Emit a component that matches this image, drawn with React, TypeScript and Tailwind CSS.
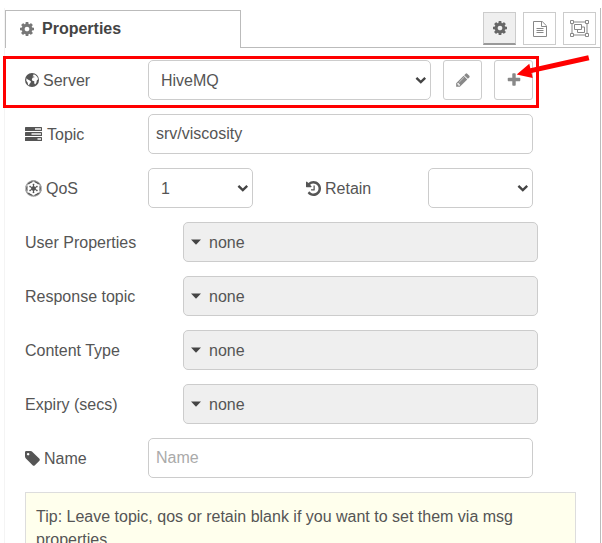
import { useState } from "react";
import type { ReactNode, SelectHTMLAttributes } from "react";
import { FaEmpire } from "react-icons/fa";

const ICONS = {
  cog: "M1152 896q0-106-75-181t-181-75-181 75-75 181 75 181 181 75 181-75 75-181zm512-109v222q0 12-8 23t-20 13l-185 28q-19 54-39 91 35 50 107 138 10 12 10 25t-9 23q-27 37-99 108t-94 71q-12 0-26-9l-138-108q-44 23-91 38-16 136-29 186-7 28-36 28h-222q-14 0-24.5-8.5t-11.5-21.5l-28-184q-49-16-90-37l-141 107q-10 9-25 9-14 0-25-11-126-114-165-168-7-10-7-23 0-12 8-23 15-21 51-66.5t54-70.5q-27-50-41-99l-183-27q-13-2-21-12.5t-8-23.5v-222q0-12 8-23t19-13l186-28q14-46 39-92-40-57-107-138-10-12-10-24 0-10 9-23 26-36 98.5-107.5t94.5-71.5q13 0 26 10l138 107q44-23 91-38 16-136 29-186 7-28 36-28h222q14 0 24.5 8.5t11.5 21.5l28 184q49 16 90 37l142-107q9-9 24-9 13 0 25 10 129 119 165 170 7 8 7 22 0 12-8 23-15 21-51 66.5t-54 70.5q26 50 41 98l183 28q13 2 21 12.5t8 23.5z",
  history: "M1664 896q0 156-61 298t-164 245-245 164-298 61q-172 0-327-72.5t-264-204.5q-7-10-6.5-22.5t8.5-20.5l137-138q10-9 25-9 16 2 23 12 73 95 179 147t225 52q104 0 198.5-40.5t163.5-109.5 109.5-163.5 40.5-198.5-40.5-198.5-109.5-163.5-163.5-109.5-198.5-40.5q-98 0-188 35.5t-160 101.5l137 138q31 30 14 69-17 40-59 40h-448q-26 0-45-19t-19-45v-448q0-42 40-59 39-17 69 14l130 129q107-101 244.5-156.5t284.5-55.5q156 0 298 61t245 164 164 245 61 298zm-640-288v448q0 14-9 23t-23 9h-320q-14 0-23-9t-9-23v-64q0-14 9-23t23-9h224v-352q0-14 9-23t23-9h64q14 0 23 9t9 23z",
  pencil: "M491 1536l91-91-235-235-91 91v107h128v128h107zm523-928q0-22-22-22-10 0-17 7l-542 542q-7 7-7 17 0 22 22 22 10 0 17-7l542-542q7-7 7-17zm-54-192l416 416-832 832h-416v-416zm683 96q0 53-37 90l-166 166-416-416 166-165q36-38 90-38 53 0 91 38l235 234q37 39 37 91z",
  plus: "M1600 736v192q0 40-28 68t-68 28h-416v416q0 40-28 68t-68 28h-192q-40 0-68-28t-28-68v-416h-416q-40 0-68-28t-28-68v-192q0-40 28-68t68-28h416v-416q0-40 28-68t68-28h192q40 0 68 28t28 68v416h416q40 0 68 28t28 68z",
  tag: "M576 448q0-53-37.5-90.5t-90.5-37.5-90.5 37.5-37.5 90.5 37.5 90.5 90.5 37.5 90.5-37.5 37.5-90.5zm1067 576q0 53-37 90l-491 492q-39 37-91 37-53 0-90-37l-715-716q-38-37-64.5-101t-26.5-117v-416q0-52 38-90t90-38h416q53 0 117 26.5t102 64.5l715 714q37 39 37 91z",
};

function Icon({ name, className, viewBox = "0 0 1792 1792" }: { name: keyof typeof ICONS; className: string; viewBox?: string }) {
  return (
    <svg viewBox={viewBox} className={className} fill="currentColor" aria-hidden="true">
      <path d={ICONS[name]} />
    </svg>
  );
}

function TasksIcon() {
  return (
    <svg viewBox="0 0 18 14" className="h-[14px] w-[18px]" aria-hidden="true">
      <g fill="currentColor">
        <rect width="17" height="4" rx="0.6" />
        <rect y="5" width="17" height="4" rx="0.6" />
        <rect y="10" width="17" height="4" rx="0.6" />
      </g>
      <g fill="#fff">
        <rect x="10" y="1.3" width="6" height="1.4" />
        <rect x="6.5" y="6.3" width="9.5" height="1.4" />
        <rect x="12.5" y="11.3" width="3.5" height="1.4" />
      </g>
    </svg>
  );
}

function GlobeIcon() {
  return (
    <svg viewBox="0 0 14 14" className="size-[14px]" aria-hidden="true">
      <circle cx="7" cy="7" r="7" fill="currentColor" />
      <g fill="#fff">
        <path d="M8 1.1l2.4.9 2 2.1.7 2.2-1.3 1.1-.4 2.3-1.3 1.7-.9-1.2.1-1.9-1.9-.5-.6-1.6 1-1.7 1.7-.2-.4-.9-1.4.2.2-1.1 1-.5z" />
        <path d="M1.5 5.3l1.3 1.2 1.6.7 1.6 1.3-.6 1.5-1 .9-.3 1.7-1-.8-.5-2.3-1.3-1.7z" />
      </g>
    </svg>
  );
}

function FileIcon() {
  return (
    <svg viewBox="0 0 14 16" className="h-4 w-[14px]" fill="none" stroke="currentColor" aria-hidden="true">
      <path d="M0.5 0.5h8.7l4.3 4.3v10.7h-13zM8.5 0.5v5h5M3.5 7.5h7M3.5 9.5h7M3.5 11.5h7" />
    </svg>
  );
}

function ObjectGroupIcon() {
  return (
    <svg viewBox="0 0 19 17" className="h-[17px] w-[19px]" fill="none" stroke="currentColor" aria-hidden="true">
      <path d="M3.5 2h12M3.5 15h12M2 3.5v10M17 3.5v10" />
      <path d="M0.5 0.5h3v3h-3zM15.5 0.5h3v3h-3zM0.5 13.5h3v3h-3zM15.5 13.5h3v3h-3z" />
      <path d="M4.5 4.5h7v5h-7zM11.5 7h3v5.5h-7v-3" />
    </svg>
  );
}

function Select({ wrapper, children, ...props }: SelectHTMLAttributes<HTMLSelectElement> & { wrapper: string }) {
  return (
    <div className={`relative ${wrapper}`}>
      <select
        {...props}
        className="h-10 w-full appearance-none rounded-[5px] border border-[#ccc] bg-white pr-7 pl-3 text-[#555]"
      >
        {children}
      </select>
      <svg viewBox="0 0 12 8" className="pointer-events-none absolute top-4 right-1 h-2 w-3" fill="none" stroke="#444" strokeWidth="2.4" aria-hidden="true">
        <path d="M1.4 1.8l4.4 4.2 4.4-4.2" />
      </svg>
    </div>
  );
}

function Label({ htmlFor, icon, className = "w-[123px]", children }: { htmlFor: string; icon?: ReactNode; className?: string; children: ReactNode }) {
  return (
    <label htmlFor={htmlFor} className={`flex shrink-0 items-center gap-1 ${className}`}>
      {icon}
      {children}
    </label>
  );
}

function TypedRow({ id, label }: { id: string; label: string }) {
  return (
    <div className="flex items-center pr-[38px]">
      <Label htmlFor={id} className="w-[158px]">{label}</Label>
      <button
        id={id}
        type="button"
        className="flex h-10 flex-1 items-center gap-2 rounded-[5px] border border-[#ccc] bg-[#efefef] px-[7px] text-left"
      >
        <svg viewBox="0 0 10 6" className="h-[6px] w-[10px]" fill="#444" aria-hidden="true">
          <path d="M0 0.5h10L5 5.7z" />
        </svg>
        none
      </button>
    </div>
  );
}

const PROPERTY_FIELDS = [
  { id: "user-properties", label: "User Properties" },
  { id: "response-topic", label: "Response topic" },
  { id: "content-type", label: "Content Type" },
  { id: "expiry", label: "Expiry (secs)" },
];

export default function App() {
  const [topic, setTopic] = useState("srv/viscosity");
  const [name, setName] = useState("");

  return (
    <div className="h-screen overflow-hidden bg-white pt-2 pr-px pl-1 font-['Liberation_Sans',Arial,sans-serif] text-[16px] leading-[23px] text-[#555]">
      <div className="h-full border-r border-l border-r-[#bbb] border-l-[#f4f4f4]">
        {/* Tabs */}
        <div className="flex h-10 items-end">
          <button
            type="button"
            className="flex h-[38px] w-[236px] items-center gap-2 border border-b-0 border-[#bbb] px-[14px] pb-[2px] font-bold text-[#444]"
          >
            <Icon name="cog" className="size-[14px] text-[#777]" viewBox="128 128 1536 1536" />
            Properties
          </button>
          <div className="flex h-10 flex-1 justify-end gap-[7px] border-b border-[#bbb] pt-1 pr-[4px]">
            <button type="button" aria-label="Properties" className="flex size-[33px] items-center justify-center border border-b-2 border-[#ccc] border-b-[#999] bg-[#efefef] text-[#666]">
              <Icon name="cog" className="size-[14px]" viewBox="128 128 1536 1536" />
            </button>
            <button type="button" aria-label="Description" className="flex size-[33px] items-center justify-center border border-[#ccc] text-[#888]">
              <FileIcon />
            </button>
            <button type="button" aria-label="Appearance" className="flex size-[33px] items-center justify-center border border-[#ccc] text-[#888]">
              <ObjectGroupIcon />
            </button>
          </div>
        </div>

        <form className="flex flex-col gap-[14px] pt-3 pr-6 pl-5">
          <div className="relative flex items-center pr-[43px]">
            <Label htmlFor="server" icon={<GlobeIcon />}>Server</Label>
            <div className="flex flex-1 gap-3">
              <Select id="server" wrapper="flex-1">
                <option>HiveMQ</option>
              </Select>
              <button type="button" aria-label="Edit server" className="flex h-10 w-[39px] items-center justify-center rounded-[3px] border border-[#ccc] text-[#888]">
                <Icon name="pencil" className="size-4" />
              </button>
              <button type="button" aria-label="Add server" className="flex h-10 w-[39px] items-center justify-center rounded-[3px] border border-[#ccc] text-[#888]">
                <Icon name="plus" className="size-4" />
              </button>
            </div>
            {/* Callout around the server row */}
            <div className="pointer-events-none absolute -top-1 right-[37px] -bottom-2 -left-[22px] border-3 border-[#f00]" />
            <svg viewBox="0 0 74 26" className="pointer-events-none absolute -top-[5px] -right-[14px] h-[26px] w-[74px]" fill="#f00" aria-hidden="true">
              <path d="M0.7 19.5L13.3 8.7 14.3 13.2 72.2 0.3 73.4 5.2 15.6 18 16.7 23z" />
            </svg>
          </div>

          <div className="flex items-center pr-[43px]">
            <Label htmlFor="topic" icon={<TasksIcon />}>Topic</Label>
            <input
              id="topic"
              value={topic}
              onChange={(e) => setTopic(e.target.value)}
              className="h-10 min-w-0 flex-1 rounded-[5px] border border-[#ccc] px-[7px]"
            />
          </div>

          <div className="flex items-center pr-[43px]">
            <Label htmlFor="qos" icon={<FaEmpire className="size-[17px]" />}>QoS</Label>
            <Select id="qos" wrapper="w-[105px]" defaultValue="1">
              <option>0</option>
              <option>1</option>
              <option>2</option>
            </Select>
            <Label htmlFor="retain" className="ml-[53px]" icon={<Icon name="history" className="size-[15px]" viewBox="128 128 1536 1536" />}>
              Retain
            </Label>
            <Select id="retain" wrapper="ml-auto w-[105px]" defaultValue="">
              <option value=""></option>
              <option>false</option>
              <option>true</option>
            </Select>
          </div>

          {PROPERTY_FIELDS.map((field) => (
            <TypedRow key={field.id} id={field.id} label={field.label} />
          ))}

          <div className="flex items-center pr-[43px]">
            <Label htmlFor="name" icon={<Icon name="tag" className="size-[15px]" viewBox="128 128 1536 1536" />}>Name</Label>
            <input
              id="name"
              placeholder="Name"
              value={name}
              onChange={(e) => setName(e.target.value)}
              className="h-10 min-w-0 flex-1 rounded-[5px] border border-[#ccc] px-[7px] placeholder:text-[#aaa]"
            />
          </div>

          <div className="border border-[#ddd] bg-[#ffffed] px-[10px] py-3">
            Tip: Leave topic, qos or retain blank if you want to set them via msg properties.
          </div>
        </form>
      </div>
    </div>
  );
}
